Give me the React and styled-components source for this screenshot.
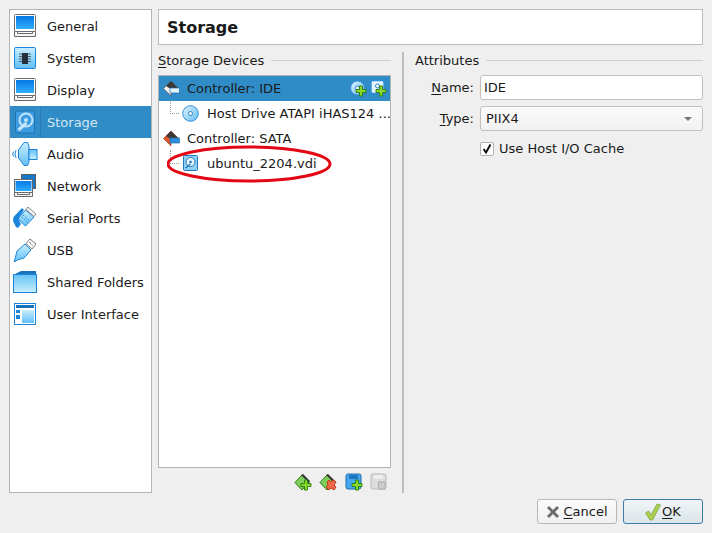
import React from 'react';
import styled, { createGlobalStyle } from 'styled-components';

const Global = createGlobalStyle`
  html, body { margin: 0; padding: 0; background: #efefef; }
  body { font-family: "DejaVu Sans", sans-serif; font-size: 13px; color: #1a1a1a; }
`;

const Dialog = styled.div`
  width: 712px;
  height: 533px;
  box-sizing: border-box;
  padding: 9px;
  background: #efefef;
  display: flex;
  flex-direction: column;
  overflow: hidden;
`;

const Main = styled.div`
  display: flex;
  height: 484px;
  gap: 6px;
`;

const Sidebar = styled.div`
  width: 143px;
  box-sizing: border-box;
  background: #fff;
  border: 1px solid #b4b4b4;
  flex: none;
`;

const NavItem = styled.div`
  height: 32px;
  display: flex;
  align-items: center;
  background: ${p => (p.$active ? '#308cc6' : 'transparent')};
  color: ${p => (p.$active ? '#d3e6f2' : '#1a1a1a')};
`;

const NavIcon = styled.div`
  width: 30px;
  height: 32px;
  display: flex;
  align-items: center;
  justify-content: center;
  flex: none;
  margin-right: 6px;
  border-right: ${p => (p.$active ? '1px solid #2a7db2' : '1px solid transparent')};
`;

const Content = styled.div`
  flex: 1;
  display: flex;
  flex-direction: column;
  min-width: 0;
`;

const TitleBox = styled.div`
  height: 36px;
  box-sizing: border-box;
  background: #fff;
  border: 1px solid #bcbcbc;
  padding-left: 8px;
  display: flex;
  align-items: center;
  font-weight: bold;
  font-size: 16px;
`;

const Panes = styled.div`
  flex: 1;
  display: flex;
  margin-top: 7px;
`;

const DevicesPane = styled.div`
  width: 233px;
  flex: none;
  display: flex;
  flex-direction: column;
`;

const Splitter = styled.div`
  width: 2px;
  background: #bdbdbd;
  margin: 0 11px;
  flex: none;
`;

const AttributesPane = styled.div`
  flex: 1;
  display: flex;
  flex-direction: column;
  min-width: 0;
`;

const GroupTitle = styled.div`
  height: 16px;
  display: flex;
  align-items: center;
  gap: 7px;
  &::after {
    content: '';
    flex: 1;
    height: 1px;
    background: #d0d0d0;
  }
`;

const Key = styled.span`
  text-decoration: underline;
  text-underline-offset: 2px;
`;

const Tree = styled.div`
  position: relative;
  margin-top: 7px;
  height: 393px;
  box-sizing: border-box;
  background: #fff;
  border: 1px solid #b4b4b4;
`;

const TreeRow = styled.div`
  position: relative;
  height: 25px;
  display: flex;
  align-items: center;
  padding-left: ${p => (p.$child ? '23px' : '4px')};
  background: ${p => (p.$active ? '#308cc6' : 'transparent')};
  white-space: nowrap;
`;

const TreeIcon = styled.div`
  width: 17px;
  height: 17px;
  flex: none;
  margin-right: ${p => (p.$child ? '8px' : '7px')};
`;

const RowActions = styled.div`
  position: absolute;
  right: 3px;
  top: 4px;
  display: flex;
  gap: 3px;
`;

const Dots = styled.div`
  position: absolute;
  left: 11px;
  top: -1px;
  width: 8px;
  height: 13px;
  border-left: 1px dotted #9a9a9a;
  border-bottom: 1px dotted #9a9a9a;
`;

const Oval = styled.svg`
  position: absolute;
  left: 8px;
  top: 67px;
  pointer-events: none;
`;

const TreeToolbar = styled.div`
  display: flex;
  justify-content: flex-end;
  gap: 5px;
  padding: 5px 2px 0 0;
`;

const FormRow = styled.div`
  display: grid;
  grid-template-columns: 59px 1fr;
  column-gap: 6px;
  align-items: center;
  height: 25px;
  margin-top: ${p => p.$gap || 0}px;
`;

const FormLabel = styled.label`
  text-align: right;
`;

const Field = styled.div`
  height: 25px;
  box-sizing: border-box;
  background: #fff;
  border: 1px solid #c0c0c0;
  border-radius: 3px;
  padding-left: 3px;
  display: flex;
  align-items: center;
`;

const Combo = styled(Field)`
  padding: 0 10px 0 5px;
  justify-content: space-between;
  background: linear-gradient(#fafafa, #f2f2f2);
  &::after {
    content: '';
    border-left: 4px solid transparent;
    border-right: 4px solid transparent;
    border-top: 4px solid #777;
  }
`;

const CheckRow = styled.div`
  display: flex;
  align-items: center;
  gap: 5px;
  margin: 10px 0 0 65px;
`;

const CheckBox = styled.div`
  width: 14px;
  height: 14px;
  box-sizing: border-box;
  background: #fff;
  border: 1px solid #b0b0b0;
  border-radius: 2px;
  display: flex;
  align-items: center;
  justify-content: center;
`;

const Footer = styled.div`
  display: flex;
  justify-content: flex-end;
  gap: 6px;
  margin-top: 6px;
`;

const Button = styled.div`
  width: 80px;
  height: 25px;
  box-sizing: border-box;
  display: flex;
  align-items: center;
  justify-content: center;
  gap: ${p => (p.$primary ? '1px' : '3px')};
  border-radius: 3px;
  border: 1px solid ${p => (p.$primary ? '#3b7ea8' : '#b8b8b8')};
  background: ${p => (p.$primary ? 'linear-gradient(#f1f5f7, #dbe5ea)' : 'linear-gradient(#fbfbfb, #f1f1f1)')};
`;

const DefsHolder = styled.svg`
  position: absolute;
  width: 0;
  height: 0;
`;

// shared gradients for the icon set
const IconDefs = () => (
  <DefsHolder aria-hidden="true">
    <defs>
      <linearGradient id="screen" x1="0" y1="0" x2="0" y2="1">
        <stop offset="0" stopColor="#0578e6" />
        <stop offset="1" stopColor="#30aefc" />
      </linearGradient>
      <linearGradient id="pale" x1="0" y1="0" x2="0" y2="1">
        <stop offset="0" stopColor="#66c3f7" />
        <stop offset="1" stopColor="#c8eefd" />
      </linearGradient>
      <linearGradient id="paleDown" x1="0" y1="0" x2="0" y2="1">
        <stop offset="0" stopColor="#c8eefd" />
        <stop offset="1" stopColor="#62bff6" />
      </linearGradient>
      <linearGradient id="disc" x1="0" y1="0" x2="1" y2="1">
        <stop offset="0" stopColor="#dff4fe" />
        <stop offset="1" stopColor="#64bdf3" />
      </linearGradient>
    </defs>
  </DefsHolder>
);

const Screen = () => (
  <svg width="24" height="24" viewBox="0 0 24 24">
    <rect x="1.500" y="0.500" width="21" height="17" rx="1" fill="#fff" stroke="#6a6a6a" />
    <rect x="3" y="2" width="18" height="13" fill="url(#screen)" />
    <path d="M1.500 17.500v5h21v-5h-3v2h-15v-2z" fill="#f4f4f4" stroke="#6a6a6a" />
  </svg>
);

const Chip = () => (
  <svg width="24" height="24" viewBox="0 0 24 24">
    <rect x="1.500" y="1.500" width="21" height="21" rx="1" fill="url(#paleDown)" stroke="#1e84d8" />
    <rect x="9" y="7" width="6" height="11" fill="#26313b" />
    <path d="M6 8h3M6 10.500h3M6 13h3M6 15.500h3M15 8h3M15 10.500h3M15 13h3M15 15.500h3" stroke="#56646f" />
  </svg>
);

const Disk = () => (
  <svg width="24" height="24" viewBox="0 0 24 24">
    <rect x="2.500" y="1" width="19" height="22" rx="2" fill="#3d9de3" stroke="#2273b4" />
    <circle cx="13" cy="10" r="6.500" fill="none" stroke="#c5e6fa" strokeWidth="2" />
    <circle cx="13" cy="10" r="2" fill="#c5e6fa" />
    <path d="M5.500 20l8-7" stroke="#c5e6fa" strokeWidth="3" />
  </svg>
);

const Speaker = () => (
  <svg width="26" height="24" viewBox="0 0 26 24">
    <path d="M6.500 8L12 0.500h3.500L17 4v16l-1.500 3.500H12L6.500 16z" fill="url(#paleDown)" stroke="#1e84d8" />
    <rect x="17" y="7.500" width="8" height="10" fill="url(#pale)" stroke="#1e84d8" />
    <path d="M4 8q-2 4 0 8M1.500 9.500q-1.500 2.500 0 5" fill="none" stroke="#1e84d8" />
  </svg>
);

const Network = () => (
  <svg width="24" height="24" viewBox="0 0 24 24">
    <rect x="8.500" y="0.500" width="14" height="14" fill="#1577c9" stroke="#5e5e5e" />
    <rect x="2" y="6.500" width="17" height="11" fill="url(#screen)" stroke="#fff" />
    <rect x="1.500" y="5.500" width="18" height="13" fill="none" stroke="#6a6a6a" />
    <path d="M1.500 18.500v4h18v-4h-3v2h-12v-2z" fill="#f2f2f2" stroke="#6a6a6a" />
  </svg>
);

const Serial = () => (
  <svg width="24" height="24" viewBox="0 0 24 24">
    <path d="M0.500 11L9 2l2 2-6 9 3 5-3 4-2-1-3-6z" fill="#1b84dc" />
    <path d="M5 13L12.500 4 21 11l-8.500 9z" fill="url(#paleDown)" stroke="#1e84d8" />
    <path d="M13 3.500L15 1l8 7-2 2.500z" fill="#f3f3f3" stroke="#8c8c8c" />
    <path d="M10 9l6 5M8.500 11l6 5" stroke="#1e84d8" strokeDasharray="1.500 1.500" />
  </svg>
);

const Usb = () => (
  <svg width="24" height="24" viewBox="0 0 24 24">
    <path d="M1 23l1-2 2-8 8-7 6 6-7 8-7 2-2 2z" fill="url(#paleDown)" stroke="#1e84d8" />
    <path d="M13 5.500l4-4.500 6 5-4 5z" fill="#fff" stroke="#777" />
    <path d="M16.500 4.500l1.500 1M18.500 6.500l1 1" stroke="#555" />
  </svg>
);

const Folder = () => (
  <svg width="24" height="24" viewBox="0 0 24 24">
    <path d="M1 4.500L8 1h15v6H1z" fill="#1b72bd" />
    <rect x="0.500" y="4.500" width="23" height="18" fill="url(#pale)" stroke="#1e84d8" />
  </svg>
);

const UiIcon = () => (
  <svg width="24" height="24" viewBox="0 0 24 24">
    <rect x="1.500" y="1.500" width="21" height="21" fill="#fff" stroke="#1e84d8" />
    <rect x="3" y="3" width="18" height="3" fill="#1572b8" />
    <rect x="3" y="8" width="4" height="3" fill="#1e84d8" />
    <rect x="3" y="13" width="4" height="4" fill="#1e84d8" />
    <rect x="9" y="8" width="12" height="13" fill="url(#paleDown)" />
  </svg>
);

const Controller = ({ dark }) => (
  <svg width="17" height="17" viewBox="0 0 17 17">
    <path d="M0.500 8.500L8 1l7 7H8v8z" fill={dark ? '#e0562a' : '#f2f2f2'} stroke={dark ? '#a83c18' : '#555'} strokeWidth=".7" />
    <path d="M3 6L8 1l7 7H6z" fill="#3a3a3a" />
    <rect x="7" y="8" width="9.500" height="5" fill={dark ? '#2d8fdc' : '#e3f3fc'} stroke="#1e6fae" strokeWidth=".7" />
  </svg>
);

const OpticalDisc = () => (
  <svg width="17" height="17" viewBox="0 0 17 17">
    <circle cx="8.500" cy="8.500" r="7.800" fill="url(#disc)" stroke="#2f8ed6" />
    <circle cx="8.500" cy="8.500" r="2" fill="#fff" stroke="#2c7fc0" />
  </svg>
);

const VdiDisk = () => (
  <svg width="17" height="17" viewBox="0 0 17 17">
    <rect x="1.500" y="0.500" width="14" height="15" rx="1" fill="#8fd0f6" stroke="#2478b8" />
    <circle cx="8.500" cy="7" r="4.500" fill="#e8f6fe" stroke="#2478b8" />
    <circle cx="8.500" cy="7" r="1.300" fill="#2478b8" />
    <path d="M3.500 13l5-4" stroke="#2478b8" strokeWidth="1.500" />
  </svg>
);

const Plus = ({ x = 6, y = 6 }) => (
  <path
    transform={`translate(${x} ${y})`}
    d="M3.500 0h3v3.500H10v3H6.500V10h-3V6.500H0v-3h3.500z"
    fill="#86d82e"
    stroke="#2b7a0b"
    strokeWidth=".9"
  />
);

const AddDisc = ({ hard }) => (
  <svg width="17" height="17" viewBox="0 0 17 17">
    {hard ? (
      <rect x="1" y="0.500" width="13" height="13" rx="2" fill="#e3f4fd" stroke="#2f8fd8" strokeWidth="1.400" />
    ) : (
      <circle cx="7.500" cy="8" r="7" fill="url(#disc)" stroke="#2f8ed6" />
    )}
    <circle cx="7.500" cy={hard ? 6 : 8} r="2" fill="#fff" stroke="#2c7fc0" />
    <Plus x={6} y={6} />
  </svg>
);

const Tool = ({ kind }) => (
  <svg width="20" height="20" viewBox="0 0 20 20">
    {kind === 'add' || kind === 'remove' ? (
      <>
        <path d="M1 9.500L8 2l7 7-7 8z" fill="#7fd05a" stroke="#2b7a0b" />
        <path d="M7 2l2-1 7 7-1 2z" fill="#333" />
        {kind === 'add' ? (
          <Plus x={7} y={7} />
        ) : (
          <path d="M8 9l2-2 2 2 2-2 3 2-2 3 2 2-2 3-3-2-2 2-3-3 2-2z" fill="#ee6a4a" stroke="#c23a1a" />
        )}
      </>
    ) : (
      <>
        <rect
          x="2"
          y="1"
          width="15"
          height="15"
          rx="2"
          fill={kind === 'disk' ? '#44a8f0' : '#dddddd'}
          stroke={kind === 'disk' ? '#1c6fae' : '#bbb'}
        />
        <rect x="5" y="2" width="9" height="4" fill={kind === 'disk' ? '#1d76bf' : '#eee'} />
        {kind === 'disk' ? (
          <Plus x={8} y={7} />
        ) : (
          <path d="M9 10l2-2 2 2 2-2 2 2-2 2 2 2-2 3-2-2-2 2-2-3 1-2z" fill="#ccc" stroke="#aaa" />
        )}
      </>
    )}
  </svg>
);

const CancelIcon = () => (
  <svg width="14" height="14" viewBox="0 0 14 14">
    <path d="M3 1l4 4 4-4 2 2-4 4 4 4-2 2-4-4-4 4-2-2 4-4-4-4z" fill="#6b6b6b" />
  </svg>
);

const OkIcon = () => (
  <svg width="16" height="18" viewBox="0 0 16 18">
    <path d="M0.500 10l3-2 2.500 4L12 1l3.500 1-8 15H5z" fill="#a8d24e" stroke="#7a9a3a" strokeWidth=".7" />
  </svg>
);

const navItems = [
  { label: 'General', icon: <Screen /> },
  { label: 'System', icon: <Chip /> },
  { label: 'Display', icon: <Screen /> },
  { label: 'Storage', icon: <Disk />, active: true },
  { label: 'Audio', icon: <Speaker /> },
  { label: 'Network', icon: <Network /> },
  { label: 'Serial Ports', icon: <Serial /> },
  { label: 'USB', icon: <Usb /> },
  { label: 'Shared Folders', icon: <Folder /> },
  { label: 'User Interface', icon: <UiIcon /> },
];

export default function App() {
  return (
    <Dialog>
      <Global />
      <IconDefs />
      <Main>
        <Sidebar>
          {navItems.map(item => (
            <NavItem key={item.label} $active={item.active}>
              <NavIcon $active={item.active}>{item.icon}</NavIcon>
              {item.label}
            </NavItem>
          ))}
        </Sidebar>
        <Content>
          <TitleBox>Storage</TitleBox>
          <Panes>
            <DevicesPane>
              <GroupTitle><span><Key>S</Key>torage Devices</span></GroupTitle>
              <Tree>
                <TreeRow $active>
                  <TreeIcon><Controller /></TreeIcon>
                  Controller: IDE
                  <RowActions>
                    <AddDisc />
                    <AddDisc hard />
                  </RowActions>
                </TreeRow>
                <TreeRow $child>
                  <Dots />
                  <TreeIcon $child><OpticalDisc /></TreeIcon>
                  Host Drive ATAPI iHAS124 ...
                </TreeRow>
                <TreeRow>
                  <TreeIcon><Controller dark /></TreeIcon>
                  Controller: SATA
                </TreeRow>
                <TreeRow $child>
                  <Dots />
                  <TreeIcon $child><VdiDisk /></TreeIcon>
                  ubuntu_2204.vdi
                </TreeRow>
                <Oval width="166" height="40" viewBox="0 0 166 40">
                  <ellipse cx="82" cy="21" rx="81" ry="17" fill="none" stroke="#e30613" strokeWidth="3" />
                </Oval>
              </Tree>
              <TreeToolbar>
                <Tool kind="add" />
                <Tool kind="remove" />
                <Tool kind="disk" />
                <Tool kind="diskOff" />
              </TreeToolbar>
            </DevicesPane>
            <Splitter />
            <AttributesPane>
              <GroupTitle>Attributes</GroupTitle>
              <FormRow $gap={7}>
                <FormLabel><Key>N</Key>ame:</FormLabel>
                <Field>IDE</Field>
              </FormRow>
              <FormRow $gap={6}>
                <FormLabel><Key>T</Key>ype:</FormLabel>
                <Combo>PIIX4</Combo>
              </FormRow>
              <CheckRow>
                <CheckBox>
                  <svg width="12" height="12" viewBox="0 0 12 12">
                    <path d="M2.500 6l2.500 3.500L9.500 1.500" fill="none" stroke="#111" strokeWidth="2" />
                  </svg>
                </CheckBox>
                Use Host I/O Cache
              </CheckRow>
            </AttributesPane>
          </Panes>
        </Content>
      </Main>
      <Footer>
        <Button><CancelIcon /><span><Key>C</Key>ancel</span></Button>
        <Button $primary><OkIcon /><span><Key>O</Key>K</span></Button>
      </Footer>
    </Dialog>
  );
}
